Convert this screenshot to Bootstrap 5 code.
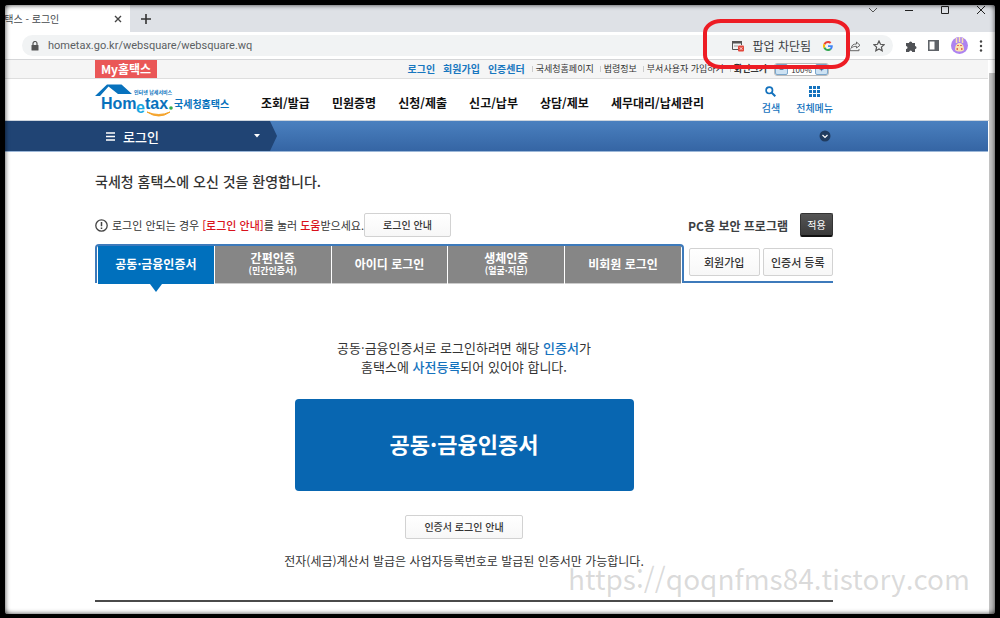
<!DOCTYPE html>
<html lang="ko">
<head>
<meta charset="utf-8">
<meta name="viewport" content="width=device-width, initial-scale=1">
<title>홈택스 - 로그인</title>
<link rel="stylesheet" href="https://cdn.jsdelivr.net/npm/bootstrap@5.3.0/dist/css/bootstrap.min.css">
<style>
body{font-family:"Noto Sans CJK KR",sans-serif;font-size:13px;line-height:19px;color:#333;background:#fff;overflow:hidden}
a{text-decoration:none;color:inherit}
button{font-family:inherit}
svg{display:block;flex:none}
.shot{min-height:100vh;padding:5px 5px 0 5px}
.frame-edge{position:fixed;inset:0;border:5px solid #000;border-bottom-width:4px;pointer-events:none;z-index:10}
.frame-edge::after{content:"";position:absolute;inset:-1px;border-radius:6px;box-shadow:0 0 0 2px #000,inset 0 0 5px 1px rgba(0,0,0,.75)}
.site{max-width:738px;margin-left:90px}
/* browser */
.tabstrip{height:27px;background:#dee1e6}
.browser-tab{width:125px;height:27px;background:#fff;font-size:10px;color:#45494d}
.browser-tab span{margin-left:-10px}
.bare{border:0;background:none;padding:0;line-height:1}
.new-tab{background:#dee1e6;border-bottom-left-radius:5px;width:32px;height:27px}
.toolbar{height:28px;border-bottom:1px solid #d5d6d8}
.omnibox{height:21px;border-radius:11px;background:#f1f3f4;margin-left:17px;width:calc(100% - 119px)}
.omnibox input{border:0;background:none;outline:0;font:11px Roboto,sans-serif;color:#5b5f63;padding:0;min-width:0}
.popup-note{font-size:12px;color:#3c4043}
/* utility bar */
.scroll-edge{width:6px;background:#c4c4c4;position:absolute;right:5px;top:73px;bottom:0}
.util{background:#f5f5f5;border-bottom:1px solid #dedede;margin-right:7px}
.util .site{height:18px;font-size:9px;line-height:18px}
.my-tag{background:#ea5757;color:#fff;font-size:12px;font-weight:700;width:62px;text-align:center}
.util-main{font-size:10px;font-weight:700;color:#1877bf}
.util-list a{padding:0 3px;position:relative}
.util-list a::before{content:"";border-left:1px solid #ccc;height:6px;display:inline-block;margin-right:3px}
.zoomer{border:1px solid #bbb;border-radius:3px;background:#fff;height:13px;width:55px;line-height:11px;font-size:8px}
.zoomer button{width:13px;height:11px;border:1px solid #7ba7cc;background:#cde2f3;border-radius:2px;font-size:8px;line-height:8px;padding:0;color:#246}
/* main menu */
.head{border-bottom:1px solid #cdd5de}
.head .site{height:41px}
.gnb{width:443px;margin-left:28px;font-size:12px;font-weight:700;color:#111;margin-top:5px}
.quick{font-size:10px;line-height:13px;font-weight:500;color:#1472bd}
.crumb{height:31px;background:linear-gradient(#4a80bf,#3565a4);border-bottom:1px solid #9cb7d8;margin-right:7px}
.crumb-here{width:272px;height:30px;background:#204474;clip-path:polygon(0 0,265px 0,100% 50%,265px 100%,0 100%);color:#fff;font-size:13px;font-weight:500;padding:0 17px 0 101px}
.crumb button{margin-right:157px}
/* login */
h1{font-size:14px;line-height:20px;font-weight:500;color:#333;margin:19px 0 0}
.help{font-size:11px;margin-top:22px;height:24px;color:#333}
.help em{font-style:normal;color:#d9121c;font-weight:500}
.soft{border:1px solid #d2d2d2;border-radius:2px;background:linear-gradient(#fff,#f7f7f7);font-size:10px;font-weight:500;color:#333;height:24px;line-height:20px;padding:0 18px}
.soft:hover{background:#eee}
.tall{height:28px;font-size:11px;padding:0}
.dark{background:linear-gradient(#555,#3a3a3a);border:1px solid #333;border-bottom:2px solid #111;border-radius:2px;color:#fff;font-size:10px;width:33px;height:24px;padding:0;line-height:20px}
.tabs-row{margin-top:7px;height:39px}
.login-tabs{width:589px;border:2px solid #3d7abb;border-bottom:0;border-radius:4px 4px 0 0;padding:0 1px;gap:1px;display:grid;grid-template-columns:repeat(5,1fr)}
.login-tabs button{border:0;background:#868686;color:#fff;font-size:12px;line-height:15px;font-weight:700;padding:0 0 3px;height:38px;position:relative;border-bottom:1px solid #ccc}
.login-tabs small{display:block;font-size:9px;line-height:11px;font-weight:700}
.login-tabs .on{background:#0070bd;border:0}
.login-tabs .on::after{content:"";position:absolute;left:50%;top:100%;margin-left:-6px;border:6px solid transparent;border-top:8px solid #0070bd;border-bottom:0}
.side-btns{border-bottom:2px solid #3d7abb;padding:4px 0 5px 5px;gap:3px}
.lead-copy{margin-top:55px}
.blue{color:#1472bd;font-weight:500}
.cta{background:#0866b1;border:0;border-radius:4px;color:#fff;font-size:22px;font-weight:700;width:339px;height:92px;margin-top:23px;padding-bottom:4px}
.footnote{font-size:12px;margin:12px 0 0}
.rule{border-top:2px solid #4a4a4a;margin-top:30px}
.watermark{position:absolute;right:30px;bottom:21px;font-size:28px;line-height:38px;color:rgba(110,110,110,.25)}
.marker{position:absolute;left:703px;top:19px;width:147px;height:50px;border:4px solid #ed1c24;border-radius:18px / 14px;z-index:5;pointer-events:none}
</style>
</head>
<body>
<div class="shot position-relative">
<header>
  <div class="tabstrip d-flex">
    <div class="browser-tab d-flex align-items-center justify-content-between pe-2"><span>홈택스 - 로그인</span>
      <button class="bare" aria-label="탭 닫기"><svg width="8" height="8" viewBox="0 0 8 8" stroke="#444" stroke-width="1.4"><path d="M1 1l6 6M7 1L1 7"/></svg></button></div>
    <button class="bare new-tab d-flex align-items-center justify-content-center" aria-label="새 탭"><svg width="10" height="10" viewBox="0 0 10 10" stroke="#333" stroke-width="1.6"><path d="M5 0v10M0 5h10"/></svg></button>
    <div class="ms-auto d-flex gap-4 pe-1 me-1">
      <svg width="12" height="12" viewBox="0 0 12 12" fill="none" stroke="#555"><path d="M2 3l4 4 4-4"/></svg>
      <svg width="12" height="12" viewBox="0 0 12 12" stroke="#222"><path d="M2 5.500h8"/></svg>
      <svg width="12" height="12" viewBox="0 0 12 12" fill="none" stroke="#222"><path d="M2.500 1.500h7v7h-7z"/></svg>
      <svg width="12" height="12" viewBox="0 0 12 12" stroke="#222"><path d="M2 1l8 8M10 1L2 9"/></svg>
    </div>
  </div>
  <div class="toolbar d-flex align-items-center">
    <div class="omnibox d-flex align-items-center">
      <svg class="ms-2 me-2" width="10" height="10" viewBox="0 0 10 10"><rect x="1.500" y="4" width="7" height="5.500" rx=".6" fill="#555"/><path d="M3 4V2.500a2 2 0 014 0V4" fill="none" stroke="#555" stroke-width="1.200"/></svg>
      <input class="flex-grow-1" aria-label="주소" value="hometax.go.kr/websquare/websquare.wq">
      <div class="d-flex align-items-center gap-2 pe-2">
        <svg width="12" height="12" viewBox="0 0 12 12"><path d="M0 1h10v2.500H0z" fill="#555"/><path d="M.5 2v7.500H6M9.500 2v3" stroke="#555" fill="none"/><path d="M2 6h4" stroke="#999"/><rect x="6" y="5.500" width="6" height="6" rx="1" fill="#e2473b"/><path d="M7.800 7.300l2.500 2.500M10.300 7.300L7.800 9.800" stroke="#fff" stroke-width=".8"/></svg>
        <span class="popup-note">팝업 차단됨</span>
        <svg class="ms-1 me-1" width="10" height="10" viewBox="0 0 48 48"><path fill="#EA4335" d="M24 9.500c3.500 0 6.700 1.200 9.200 3.600l6.900-6.900C35.900 2.400 30.500 0 24 0 14.600 0 6.500 5.400 2.600 13.200l8 6.200C12.400 13.700 17.700 9.500 24 9.500z"/><path fill="#4285F4" d="M47 24.500c0-1.600-.2-3.100-.4-4.500H24v9h12.900c-.6 3-2.300 5.500-4.800 7.200l7.700 6C44.400 38 47 31.800 47 24.500z"/><path fill="#FBBC05" d="M10.500 28.600a14.500 14.500 0 010-9.200l-8-6.200a24 24 0 000 21.600z"/><path fill="#34A853" d="M24 48c6.500 0 12-2.100 15.900-5.800l-7.700-6C30 37.700 27.200 38.500 24 38.500c-6.300 0-11.600-4.200-13.500-9.900l-8 6.200C6.500 42.600 14.600 48 24 48z"/></svg>
        <svg class="ms-1" width="12" height="12" viewBox="0 0 12 12" fill="none" stroke="#666"><path d="M2.500 8c0-3 2-4 5-4V2l3.500 3.300L7.500 8V6.300C5 6.300 3.800 6.800 2.500 8zM1 8v2.700h9V9"/></svg>
        <svg class="ms-1" width="12" height="12" viewBox="0 0 12 12" fill="none" stroke="#555" stroke-width="1.200"><path d="M6 1l1.500 3.300 3.600.4-2.700 2.400.8 3.600L6 8.900l-3.200 1.800.8-3.600L.9 4.700l3.600-.4z"/></svg>
      </div>
    </div>
    <div class="d-flex align-items-center justify-content-between flex-grow-1 ps-2 ms-1 pe-2 me-1">
      <svg width="12" height="12" viewBox="0 0 12 12" fill="#505256"><path d="M1 3h3a1.600 1.600 0 113.200 0H10v3a1.500 1.500 0 110 3v3H7.200a1.500 1.500 0 00-3 0H1V9a1.500 1.500 0 000-3z"/></svg>
      <svg width="11" height="11" viewBox="0 0 11 11"><path d="M.8.800h9.400v9.400H.8z" fill="none" stroke="#5f6368" stroke-width="1.600"/><path d="M6.500 1H10v9H6.500z" fill="#5f6368"/></svg>
      <svg width="17" height="17" viewBox="0 0 17 17"><circle cx="8.500" cy="8.500" r="8.500" fill="#ad83f0"/><path d="M5.500 1v5M8.500 0v5M11.500 1v5" stroke="#f7dfb0" stroke-width="1.500"/><path d="M4 13c0-5 2-7 4.500-7s4.500 2 4.500 7c-2 2-7 2-9 0z" fill="#fae3ae"/><path d="M7 8v1M10 8v1M5.500 12H7M10 12h1.500" stroke="#d74545" stroke-width="1.500"/></svg>
      <svg width="4" height="12" viewBox="0 0 4 12" fill="#444"><circle cx="2" cy="1.500" r="1.200"/><circle cx="2" cy="6" r="1.200"/><circle cx="2" cy="10.500" r="1.200"/></svg>
    </div>
  </div>
</header>
<div class="scroll-edge"></div>

<div class="util"><div class="site d-flex align-items-center">
  <a href="#" class="my-tag">My홈택스</a>
  <nav class="ms-auto d-flex align-items-center text-nowrap">
    <div class="util-main d-flex gap-2 me-1"><a href="#">로그인</a><a href="#">회원가입</a><a href="#">인증센터</a></div>
    <div class="util-list"><a href="#">국세청홈페이지</a><a href="#">법령정보</a><a href="#">부서사용자 가입하기</a><a href="#"><b>화면크기</b></a></div>
  </nav>
  <div class="zoomer d-flex justify-content-between ms-1 me-1"><button aria-label="축소">−</button>100%<button aria-label="확대">+</button></div>
</div></div>

<div class="head"><div class="site d-flex align-items-center">
  <a href="#" aria-label="홈택스"><svg width="138" height="36" viewBox="0 0 138 36" font-family="Noto Sans CJK KR, sans-serif" font-weight="700" fill="#0872bd">
    <path d="M0 14L12 2.500h14.500L37 12H23l-9.500-7.500L5 14z"/>
    <path d="M52 30q12 8 23 0-11 5-23 0z" fill="#f5a329" stroke="#f5a329"/>
    <text x="39" y="12" font-size="5">인터넷 납세서비스</text>
    <text x="6" y="27" font-size="16" font-family="Liberation Sans, sans-serif">Hom</text>
    <text x="41" y="31" font-size="16" font-family="Liberation Sans, sans-serif" fill="#18a7e2">e</text>
    <text x="50" y="27" font-size="16" font-family="Liberation Sans, sans-serif">tax</text><circle cx="76" cy="26" r="1.800" fill="#35ae4a"/>
    <text x="79" y="26" font-size="10">국세청홈택스</text>
  </svg></a>
  <nav class="gnb d-flex justify-content-between text-nowrap"><a href="#">조회/발급</a><a href="#">민원증명</a><a href="#">신청/제출</a><a href="#">신고/납부</a><a href="#">상담/제보</a><a href="#">세무대리/납세관리</a></nav>
  <div class="quick d-flex ms-auto text-center text-nowrap">
    <a href="#" class="me-3"><svg class="mx-auto mb-1" width="11" height="11" viewBox="0 0 11 11" fill="none" stroke="#1472bd"><circle cx="4.300" cy="4.300" r="3.200" stroke-width="1.700"/><path d="M6.500 6.500L10.300 10.300" stroke-width="2"/></svg>검색</a>
    <a href="#"><svg class="mx-auto mb-1" width="11" height="11" viewBox="0 0 11 11" fill="#1472bd"><path d="M0 0h3v3H0zM4 0h3v3H4zM8 0h3v3H8zM0 4h3v3H0zM4 4h3v3H4zM8 4h3v3H8zM0 8h3v3H0zM4 8h3v3H4zM8 8h3v3H8z"/></svg>전체메뉴</a>
  </div>
</div></div>

<div class="crumb d-flex align-items-center justify-content-between">
  <div class="crumb-here d-flex align-items-center gap-2">
    <svg width="9" height="9" viewBox="0 0 9 9" stroke="#fff" stroke-width="1.500"><path d="M0 1h9M0 4.500h9M0 8h9"/></svg><span>로그인</span>
    <svg class="ms-auto" width="6" height="4" viewBox="0 0 6 4" fill="#fff"><path d="M0 0h6L3 3.500z"/></svg>
  </div>
  <button class="bare" aria-label="펼치기"><svg width="12" height="12" viewBox="0 0 12 12"><circle cx="6" cy="6" r="5.500" fill="#203c60"/><path d="M3.500 5L6 7.500 8.500 5" fill="none" stroke="#fff" stroke-width="1.200"/></svg></button>
</div>

<main class="site">
  <h1>국세청 홈택스에 오신 것을 환영합니다.</h1>
  <div class="help d-flex align-items-center text-nowrap">
    <svg class="me-1" width="13" height="13" viewBox="0 0 13 13" fill="none" stroke="#444"><circle cx="6.500" cy="6.500" r="5.700" stroke-width="1.300"/><path d="M6.500 3v4.200M6.500 8.500v1.500" stroke-width="1.500"/></svg>
    <span>로그인 안되는 경우 <em>[로그인 안내]</em>를 눌러 <em>도움</em>받으세요.</span>
    <button class="soft">로그인 안내</button>
    <strong class="ms-auto me-2 pe-1 popup-note">PC용 보안 프로그램</strong><button class="dark">적용</button>
  </div>
  <div class="tabs-row d-flex">
    <div class="login-tabs" role="tablist">
      <button class="on" role="tab" aria-selected="true">공동·금융인증서</button><button role="tab">간편인증<small>(민간인증서)</small></button><button role="tab">아이디 로그인</button><button role="tab">생체인증<small>(얼굴·지문)</small></button><button role="tab">비회원 로그인</button>
    </div>
    <div class="side-btns d-flex flex-grow-1"><button class="soft tall flex-fill w-50">회원가입</button><button class="soft tall flex-fill w-50">인증서 등록</button></div>
  </div>
  <section class="text-center">
    <p class="lead-copy mb-0">공동·금융인증서로 로그인하려면 해당 <span class="blue">인증서</span>가<br>홈택스에 <span class="blue">사전등록</span>되어 있어야 합니다.</p>
    <button class="cta">공동·금융인증서</button>
    <div class="mt-4"><button class="soft">인증서 로그인 안내</button></div>
    <p class="footnote">전자(세금)계산서 발급은 사업자등록번호로 발급된 인증서만 가능합니다.</p>
  </section>
  <div class="rule"></div>
</main>
<div class="watermark">https://qoqnfms84.tistory.com</div>
<div class="marker"></div>
</div>
<div class="frame-edge"></div>
<script src="https://cdn.jsdelivr.net/npm/bootstrap@5.3.0/dist/js/bootstrap.bundle.min.js"></script>
</body>
</html>
